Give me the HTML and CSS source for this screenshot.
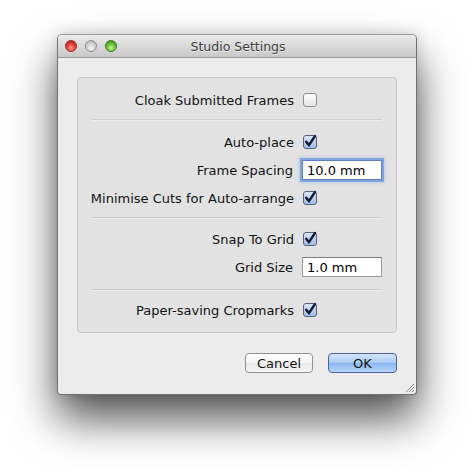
FILE: index.html
```html
<!DOCTYPE html>
<html>
<head>
<meta charset="utf-8">
<link rel="stylesheet" href="styles.css">
</head>
<body>
<div class="window">
  <div class="titlebar">
    <div class="lights">
      <span class="light red"></span>
      <span class="light gray"></span>
      <span class="light green"></span>
    </div>
    <div class="title">Studio Settings</div>
  </div>
  <div class="content">
    <div class="group">
      <div class="row r-cloak">
        <span class="label">Cloak Submitted Frames</span>
        <span class="check"></span>
      </div>
      <div class="sep s1"></div>
      <div class="row r-auto">
        <span class="label">Auto-place</span>
        <span class="check on"><svg viewBox="0 0 14 14"><path d="M3.2 6.8 L6 10.2 L12 1" /></svg></span>
      </div>
      <div class="row r-mid">
        <span class="label">Frame Spacing</span>
        <span class="field focus">10.0 mm</span>
      </div>
      <div class="row r-mid">
        <span class="label">Minimise Cuts for Auto-arrange</span>
        <span class="check on"><svg viewBox="0 0 14 14"><path d="M3.2 6.8 L6 10.2 L12 1" /></svg></span>
      </div>
      <div class="sep s2"></div>
      <div class="row r-snap">
        <span class="label">Snap To Grid</span>
        <span class="check on"><svg viewBox="0 0 14 14"><path d="M3.2 6.8 L6 10.2 L12 1" /></svg></span>
      </div>
      <div class="row r-mid">
        <span class="label">Grid Size</span>
        <span class="field">1.0 mm</span>
      </div>
      <div class="sep s3"></div>
      <div class="row r-paper">
        <span class="label">Paper-saving Cropmarks</span>
        <span class="check on"><svg viewBox="0 0 14 14"><path d="M3.2 6.8 L6 10.2 L12 1" /></svg></span>
      </div>
    </div>
    <div class="buttons">
      <span class="btn">Cancel</span>
      <span class="btn default">OK</span>
    </div>
  </div>
  <svg class="grip" viewBox="0 0 12 12"><path d="M11 3 L3 11 M11 6 L6 11 M11 9 L9 11" /></svg>
</div>
</body>
</html>
```
FILE: styles.css
```css
html, body {
  margin: 0;
  padding: 0;
  background: #ffffff;
}
body {
  width: 474px;
  height: 473px;
  overflow: hidden;
  font-family: "DejaVu Sans", "Liberation Sans", sans-serif;
  font-size: 13px;
  color: #111;
}
.window {
  position: relative;
  margin: 34px 0 0 57px;
  width: 358px;
  height: 359px;
  border: 1px solid #6f6f6f;
  border-top-color: #9a9a9a;
  border-radius: 5px 5px 4px 4px;
  background: #ececec;
  box-shadow: 0 24px 44px rgba(0,0,0,0.68), 0 0 14px rgba(0,0,0,0.14);
  overflow: hidden;
}
.titlebar {
  position: relative;
  height: 22px;
  background: linear-gradient(#ebebeb, #d8d8d8 50%, #c9c9c9);
  border-bottom: 1px solid #9c9c9c;
  display: flex;
  align-items: center;
  justify-content: center;
}
.lights {
  position: absolute;
  left: 7px;
  top: 5px;
  display: flex;
  gap: 8px;
}
.light {
  width: 12px;
  height: 12px;
  border-radius: 50%;
  box-sizing: border-box;
}
.red {
  background: radial-gradient(circle at 50% 70%, #ff9a90 0%, #e2443a 45%, #a8150f 100%);
  border: 1px solid #9b2a24;
}
.gray {
  background: radial-gradient(circle at 50% 70%, #f4f4f4 0%, #d2d2d2 50%, #a6a6a6 100%);
  border: 1px solid #8f8f8f;
}
.green {
  background: radial-gradient(circle at 50% 70%, #c9f59b 0%, #6cc23b 45%, #2e7d12 100%);
  border: 1px solid #3f7d25;
}
.title {
  font-size: 12.5px;
  color: #3d3d3d;
  text-shadow: 0 1px 0 rgba(255,255,255,0.6);
  margin-left: 2px;
}
.content {
  padding: 19px 19px 0 19px;
}
.group {
  height: 256px;
  box-sizing: border-box;
  background: #e2e2e2;
  border: 1px solid #c9c9c9;
  border-radius: 4px;
  padding: 12px 14px 0 14px;
}
.row {
  display: flex;
  justify-content: flex-end;
  align-items: center;
  height: 20px;
}
.row .label {
  margin-right: 9px;
  white-space: nowrap;
}
.r-cloak, .r-auto, .r-snap, .r-paper {
  padding-right: 65px;
}
.r-auto { margin-top: 11px; }
.r-mid { margin-top: 8px; }
.r-mid .check { margin-right: 65px; }
.r-snap { margin-top: 10px; }
.r-paper { margin-top: 9px; }
.sep {
  height: 1px;
  background: #cdcdcd;
  border-bottom: 1px solid #ececec;
}
.s1 { margin-top: 9px; }
.s2 { margin-top: 9px; }
.s3 { margin-top: 12px; }
.check {
  width: 14px;
  height: 14px;
  box-sizing: border-box;
  border: 1px solid #8c8c8c;
  border-radius: 3px;
  background: linear-gradient(#ffffff, #f0f0f0 60%, #e4e4e4);
  display: flex;
  align-items: center;
  justify-content: center;
}
.check.on {
  border-color: #56627c;
  background: linear-gradient(#dde8f8, #b8cdee 55%, #9fbbe6);
}
.check svg {
  width: 14px;
  height: 14px;
  flex: none;
  overflow: visible;
}
.check path {
  fill: none;
  stroke: #141c33;
  stroke-width: 2.4;
  stroke-linecap: round;
  stroke-linejoin: round;
}
.field {
  width: 80px;
  height: 20px;
  box-sizing: border-box;
  background: #fff;
  border: 1px solid #9a9a9a;
  border-top-color: #7a7a7a;
  padding: 0 4px;
  display: flex;
  align-items: center;
  font-size: 13px;
  color: #000;
}
.field.focus {
  border-color: #5d7fbf;
  box-shadow: 0 0 0 2px rgba(110,150,220,0.75), 0 0 3px 3px rgba(130,170,230,0.4);
}
.buttons {
  display: flex;
  justify-content: flex-end;
  gap: 15px;
  margin-top: 20px;
}
.btn {
  height: 20px;
  box-sizing: border-box;
  border-radius: 4px;
  display: flex;
  align-items: center;
  justify-content: center;
  font-size: 13px;
  color: #111;
}
.btn:first-child {
  width: 68px;
  border: 1px solid #8f8f8f;
  background: linear-gradient(#ffffff, #f4f4f4 50%, #e8e8e8 51%, #f6f6f6);
}
.btn.default {
  width: 69px;
  border: 1px solid #4f5f98;
  background: linear-gradient(#d6e6fb, #a9c9f4 50%, #8ab5ef 51%, #b7d7fb);
}
.grip {
  position: absolute;
  right: 1px;
  bottom: 1px;
  width: 12px;
  height: 12px;
}
.grip path {
  stroke: #8a8a8a;
  stroke-width: 1;
  fill: none;
}
```
